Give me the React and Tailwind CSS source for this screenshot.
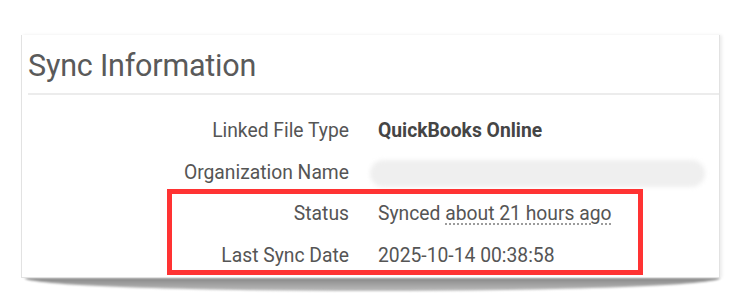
export default function App() {
  const rows = [
    { label: "Linked File Type", value: <span className="font-bold text-[#454545]">QuickBooks Online</span> },
    {
      label: "Organization Name",
      value: <div className="ml-[-8px] h-[27px] w-[335px] rounded-full bg-[#efefef] blur-[2px]" />,
    },
    {
      label: "Status",
      value: (
        <span>
          Synced{" "}
          <span className="underline decoration-dotted decoration-[#999] underline-offset-[3px]">
            about 21 hours ago
          </span>
        </span>
      ),
    },
    { label: "Last Sync Date", value: "2025-10-14 00:38:58" },
  ];

  return (
    <div className="h-[302px] w-[740px] overflow-hidden bg-white pl-[21px] pt-[35px] font-['Roboto',sans-serif] text-[#555]">
      <div className="relative h-[243px] w-[699px]">
        <div className="absolute left-[4px] right-0 top-full h-[13px] rounded-b-[50%_100%] bg-gradient-to-b from-[#888] to-[#bdbdbd] blur-[1px]" />
        <div className="relative h-full border-x border-b border-[#e2e2e2] bg-white shadow-[2px_0_3px_rgba(0,0,0,0.08)]">
          <div className="ml-[6px] flex h-[60px] items-center border-b-2 border-[#ececec] pt-[5px]">
            <h2 className="text-[30.5px] font-normal leading-none tracking-[-0.2px] text-[#5a5a5a]">
              Sync Information
            </h2>
          </div>
          <div className="pt-[16px]">
            {rows.map((r) => (
              <div key={r.label} className="flex h-[41.5px] items-center text-[19.3px]">
                <div className="w-[327px] text-right">{r.label}</div>
                <div className="ml-[29px]">{r.value}</div>
              </div>
            ))}
          </div>
          <div className="absolute left-[145px] top-[154px] h-[86px] w-[476px] border-[5px] border-[#ff3333]" />
        </div>
      </div>
    </div>
  );
}
